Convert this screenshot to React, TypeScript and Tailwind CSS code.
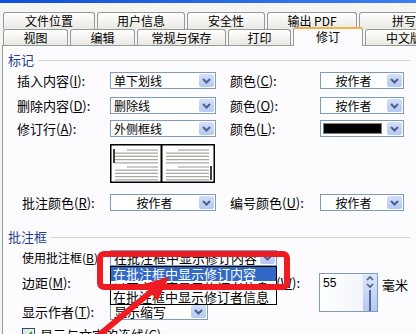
import React from "react";

function Chevron() {
  return (
    <svg width="9" height="6" viewBox="0 0 9 6">
      <path d="M1 1l3.5 3.5L8 1" fill="none" stroke="#4d6185" strokeWidth="2" />
    </svg>
  );
}

function Select({ w, h = "h-[17px]", children, center, fill }: { w: string; h?: string; children?: React.ReactNode; center?: boolean; fill?: boolean }) {
  return (
    <div className={`${w} ${h} flex border border-[#7f9db9] bg-white`}>
      {fill ? (
        <div className="flex-1 m-[2px] mr-[4px] bg-black border border-[#808080]" />
      ) : (
        <div className={`flex-1 flex items-center overflow-hidden whitespace-nowrap text-[12px] px-[3px] ${center ? "justify-center" : ""}`}>{children}</div>
      )}
      <div className="w-[15px] m-[1px] rounded-[2px] bg-gradient-to-b from-[#d3defa] to-[#b4c8f6] flex items-center justify-center">
        <Chevron />
      </div>
    </div>
  );
}

function Tab({ label, w, active }: { label: string; w: string; active?: boolean }) {
  if (active) {
    return (
      <div className={`${w} h-[19px] -mt-[2px] shrink-0 border border-b-0 border-[#919b9c] border-t-2 border-t-[#f2b24a] rounded-t-[3px] bg-[#fcfcfe] text-[12px] leading-[15px] text-center`}>
        {label}
      </div>
    );
  }
  return (
    <div className={`${w} h-full shrink-0 border border-b-0 border-[#919b9c] rounded-t-[3px] bg-gradient-to-b from-white to-[#e9e8e2] text-[12px] leading-[16px] text-center whitespace-nowrap overflow-hidden`}>
      {label}
    </div>
  );
}

function Header({ label }: { label: string }) {
  return (
    <div className="flex items-center h-[16px] pl-[5px] pr-[6px]">
      <span className="text-[13px] leading-[16px] text-[#23408e]">{label}</span>
      <div className="ml-[4px] flex-1 h-px bg-[#d4d4c8]" />
    </div>
  );
}

function Preview() {
  const para = (x1: number, x2: number, y0: number, indent: number) =>
    [0, 1, 2, 3, 4].map(i => (
      <line key={`${x1}-${y0}-${i}`} x1={i === 0 ? x1 + indent : x1} x2={x2} y1={y0 + i * 3.2} y2={y0 + i * 3.2} stroke="#a8a8a0" strokeWidth="1.2" />
    ));
  return (
    <svg width="105" height="39" viewBox="0 0 105 39">
      <rect x="0.75" y="0.75" width="103.5" height="37.5" fill="#fff" stroke="#000" strokeWidth="1.5" />
      <line x1="51.5" y1="0" x2="51.5" y2="39" stroke="#000" strokeWidth="2" />
      {para(5, 48, 6, 12)}
      {para(5, 48, 23, 12)}
      {para(56, 99, 6, 12)}
      {para(56, 99, 23, 12)}
      <line x1="4" y1="5" x2="4" y2="19" stroke="#000" strokeWidth="1.5" />
      <line x1="101" y1="22" x2="101" y2="36" stroke="#000" strokeWidth="1.5" />
    </svg>
  );
}

export default function App() {
  return (
    <div className="relative w-[416px] h-[334px] overflow-hidden bg-[#f5f5f1] text-black font-['Noto_Sans_CJK_SC','Noto_Sans',sans-serif]">
      <div className="h-[3px] bg-gradient-to-r from-[#0b50d8] to-[#3a80f2]" />

      {/* Tabs */}
      <div className="mt-[9px] h-[17px] flex gap-[2px] pl-[3px]">
        <Tab label="文件位置" w="w-[92px]" />
        <Tab label="用户信息" w="w-[88px]" />
        <Tab label="安全性" w="w-[78px]" />
        <Tab label="输出 PDF" w="w-[90px]" />
        <Tab label="拼写" w="w-[90px]" />
      </div>
      <div className="relative z-10 h-[16px] flex gap-[2px] pl-[3px]">
        <Tab label="视图" w="w-[65px]" />
        <Tab label="编辑" w="w-[65px]" />
        <Tab label="常规与保存" w="w-[89px]" />
        <Tab label="打印" w="w-[63px]" />
        <Tab label="修订" w="w-[70px]" active />
        <Tab label="中文版式" w="w-[90px]" />
      </div>

      {/* Panel */}
      <div className="ml-[2px] h-[289px] border-t border-l border-[#919b9c] bg-[#fcfcfe] pt-[6px] text-[13px]">
        <Header label="标记" />

        <div className="mt-[4px] h-[17px] flex items-center pl-[14px]">
          <span className="w-[93px]">插入内容(<u>I</u>):</span>
          <Select w="w-[106px]">单下划线</Select>
          <span className="ml-[14px] w-[90px]">颜色(<u>C</u>):</span>
          <Select w="w-[84px]" center>按作者</Select>
        </div>
        <div className="mt-[8px] h-[17px] flex items-center pl-[14px]">
          <span className="w-[93px]">删除内容(<u>D</u>):</span>
          <Select w="w-[106px]">删除线</Select>
          <span className="ml-[14px] w-[90px]">颜色(<u>O</u>):</span>
          <Select w="w-[84px]" center>按作者</Select>
        </div>
        <div className="mt-[6px] h-[17px] flex items-center pl-[14px]">
          <span className="w-[93px]">修订行(<u>A</u>):</span>
          <Select w="w-[106px]">外侧框线</Select>
          <span className="ml-[14px] w-[90px]">颜色(<u>L</u>):</span>
          <Select w="w-[84px]" fill />
        </div>

        <div className="mt-[7px] pl-[107px] h-[39px]">
          <Preview />
        </div>

        <div className="mt-[11px] h-[17px] flex items-center pl-[14px]">
          <span className="w-[93px] pl-[5px]">批注颜色(<u>R</u>):</span>
          <Select w="w-[106px]" center>按作者</Select>
          <span className="ml-[14px] w-[90px]">编号颜色(<u>U</u>):</span>
          <Select w="w-[84px]" center>按作者</Select>
        </div>

        <div className="mt-[18px]">
          <Header label="批注框" />
        </div>

        <div className="mt-[5px] h-[16px] flex items-center pl-[19px]">
          <span className="w-[88px] text-[12px] whitespace-nowrap overflow-hidden">使用批注框(<u>B</u>):</span>
          <Select w="w-[167px]" h="h-[16px]"><span className="text-[13px]">在批注框中显示修订内容</span></Select>
        </div>

        <div className="mt-[7px] flex items-start">
          <div className="w-[297px]">
            <div className="h-[20px] flex items-center pl-[19px]">
              <span className="w-[88px]">边距(<u>M</u>):</span>
              <span className="ml-auto">宽度(<u>W</u>):</span>
            </div>
            <div className="mt-[10px] h-[17px] flex items-center pl-[19px]">
              <span className="w-[88px]">显示作者(<u>T</u>):</span>
              <Select w="w-[98px]"><span className="text-[13px]">显示缩写</span></Select>
            </div>
          </div>
          <div className="ml-[19px] w-[59px] h-[39px] flex border border-[#7f9db9] bg-gradient-to-r from-white to-[#eef2fb]">
            <div className="flex-1 pl-[3px] pt-[2px] text-[12px] leading-[14px] font-['Liberation_Sans',sans-serif]">55</div>
            <div className="w-[14px] bg-gradient-to-b from-[#dbe5fb] to-[#b7c9f1] flex flex-col items-center">
              <svg width="10" height="16" viewBox="0 0 10 16">
                <path d="M2 6l3-3 3 3" fill="none" stroke="#4d6185" strokeWidth="1.6" />
                <path d="M2 10l3 3 3-3" fill="none" stroke="#4d6185" strokeWidth="1.6" />
              </svg>
              <div className="w-[2px] flex-1 bg-[#4d6a9e]" />
            </div>
          </div>
          <span className="ml-[4px] mt-[2px]">毫米</span>
        </div>

        <div className="mt-[7px] flex items-center pl-[19px] h-[15px]">
          <div className="w-[13px] h-[13px] border border-[#1c5180] bg-gradient-to-br from-[#e0e0d8] to-white flex items-center justify-center">
            <svg width="9" height="9" viewBox="0 0 9 9">
              <path d="M1 4.5l2.3 2.3L8 2" fill="none" stroke="#21a121" strokeWidth="1.8" />
            </svg>
          </div>
          <span className="ml-[5px]">显示与文字的连线(<u>C</u>)</span>
        </div>
      </div>

      {/* Open dropdown list */}
      <div className="absolute left-[110px] top-[266px] w-[167px] h-[39px] border border-black bg-white text-[13px] leading-[14px] overflow-hidden z-20">
        <div className="h-[14px] bg-[#316ac5] text-white pl-[2px] whitespace-nowrap">在批注框中显示修订内容</div>
        <div className="h-[8px] overflow-hidden pl-[2px] whitespace-nowrap">以固定宽度显示修订者信息</div>
        <div className="pl-[2px] pt-[1px] whitespace-nowrap">在批注框中显示修订者信息</div>
      </div>

      {/* Red annotation */}
      <svg className="absolute left-0 top-0 z-30 pointer-events-none" width="416" height="334" viewBox="0 0 416 334">
        <rect x="100" y="254" width="187" height="33" rx="4" fill="none" stroke="#ef1b22" strokeWidth="6" />
        <line x1="92.7" y1="340.4" x2="152" y2="291" stroke="#ef1b22" strokeWidth="6" />
        <polygon points="169,277 143.5,283.9 157.5,300.9" fill="#ef1b22" />
      </svg>
    </div>
  );
}
